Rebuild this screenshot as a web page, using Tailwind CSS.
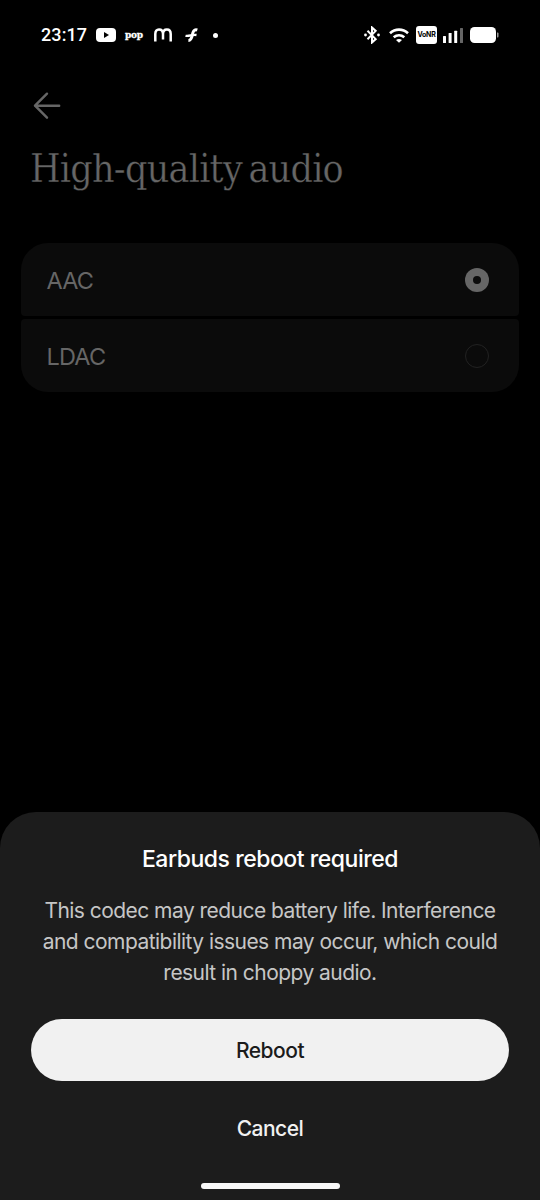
<!DOCTYPE html>
<html lang="en">
<head>
<meta charset="utf-8">
<title>High-quality audio</title>
<script src="https://cdn.jsdelivr.net/npm/@tailwindcss/browser@4"></script>
</head>
<body class="bg-black">
<div class="flex h-[1200px] w-[540px] flex-col overflow-hidden bg-black font-['Inter',sans-serif] text-white">
  <header class="flex h-[70px] items-center justify-between pl-[41px] pr-[41px]">
    <div class="flex items-center">
      <span class="w-[55px] font-['Roboto',sans-serif] text-[18px] leading-5 font-medium tracking-[0.1px]">23:17</span>
      <svg class="mr-[9px] h-[14px] w-5" viewBox="0 0 20 14"><rect width="20" height="14" rx="4" fill="#fff"/><path d="M8 4l5 3-5 3z" fill="#000"/></svg>
      <span class="w-[29px] pb-px font-['DejaVu_Serif_Condensed','DejaVu_Serif',serif] text-[10px] leading-3 font-bold tracking-[-0.3px] [-webkit-text-stroke:0.3px_white]">pop</span>
      <svg class="mr-[13px] h-[14px] w-[18px]" viewBox="0 0 18 14" fill="none" stroke="#fff" stroke-width="2.5"><path d="M1.3 13.500V6C1.3 3 2.8 1.4 5 1.4S9 3 9 6v5.5M9 6c0-3 1.6-4.600 3.900-4.600S16.700 3 16.700 6v7.500"/></svg>
      <svg class="mr-[14px] h-[14px] w-[14px]" viewBox="0 0 14 14" fill="none" stroke="#fff"><path d="M12.300 2C9 .9 7.900 3.800 7.300 7S6 12.500 3.400 12.500" stroke-width="3"/><path d="M.5 7.800c4 .8 6.500-1.600 11-.8" stroke-width="2.300"/></svg>
      <span class="size-[5px] rounded-full bg-white"></span>
    </div>
    <div class="flex items-center">
      <svg class="mr-[9px] h-[18px] w-4" viewBox="0 0 16 18" fill="none" stroke="#fff" stroke-width="2"><path d="M3.500 4.800l8.200 8.300L8 16.500v-15l3.700 3.400-8.200 8.300"/><circle cx="1.500" cy="9" r="1.400" fill="#fff" stroke="none"/><circle cx="14.500" cy="9" r="1.400" fill="#fff" stroke="none"/></svg>
      <svg class="mr-[7px] h-[15px] w-5" viewBox="0 0 20 15" fill="none" stroke="#fff" stroke-width="2.600"><path d="M1 5.300c5.200-4.900 12.800-4.900 18 0M4.700 9.300c3.200-2.700 7.400-2.700 10.600 0"/><path d="M7 12c1.800-1.500 4.200-1.500 6 0l-3 2.800z" fill="#fff" stroke="none"/></svg>
      <span class="mr-[6px] flex h-[18px] w-[21px] items-center justify-center rounded-[3px] bg-white text-[7px] font-bold tracking-[-0.2px] text-black">VoNR</span>
      <svg class="mr-[7px] h-[15px] w-5" viewBox="0 0 20 15" fill="#fff"><rect x="0" y="8" width="3" height="7" rx=".5"/><rect x="5.600" y="5" width="3" height="10" rx=".5"/><rect x="11.200" y="2.800" width="3" height="12.200" rx=".5"/><rect x="17" y="0" width="3" height="15" rx=".5" fill="#666"/></svg>
      <svg class="h-4 w-[29px]" viewBox="0 0 29 16"><rect width="26" height="16" rx="4.500" fill="#fff"/><path d="M27 5.500h.5q1 0 1 1v3q0 1-1 1H27z" fill="#999"/></svg>
    </div>
  </header>

  <main class="flex flex-1 flex-col">
    <svg class="mt-[22px] ml-[33px] h-7 w-7" viewBox="0 0 28 28" fill="none" stroke="#666" stroke-width="2.400" stroke-linecap="round" stroke-linejoin="round"><path d="M26.200 13.700H2M14 1.700L2 13.700l12 12"/></svg>
    <h1 class="mt-[24px] ml-[30px] h-[52px] font-['DejaVu_Serif_Condensed','DejaVu_Serif',serif] text-[39px] leading-[50px] tracking-[-0.75px] [word-spacing:-4px] whitespace-nowrap text-[#666] [-webkit-text-stroke:0.35px_black]">High-quality audio</h1>
    <ul class="mx-[21px] mt-[47px] flex flex-col gap-[3px] text-[23.500px] text-[#666]">
      <li class="flex h-[73px] items-center justify-between rounded-t-[27px] rounded-b-[4px] bg-[#0b0b0b] pr-[30px] pl-[25.500px]"><span class="pt-[2px] tracking-[-0.9px]">AAC</span><span class="flex size-6 items-center justify-center rounded-full bg-[#666]"><span class="size-2 rounded-full bg-[#0b0b0b]"></span></span></li>
      <li class="flex h-[73px] items-center justify-between rounded-t-[4px] rounded-b-[27px] bg-[#0b0b0b] pr-[30px] pl-[25.500px]"><span class="pt-[2px] tracking-[-0.8px]">LDAC</span><span class="size-6 rounded-full border border-[#222]"></span></li>
    </ul>
  </main>

  <section class="flex h-[388px] flex-col items-center rounded-t-[36px] bg-[#1c1c1c]">
    <h2 class="mt-[32px] text-[23px] leading-[30px] font-medium tracking-[-0.47px]">Earbuds reboot required</h2>
    <p class="mt-[21px] text-center text-[21px] leading-[31px] tracking-[-0.54px] whitespace-nowrap text-[#c6c6c6]">This codec may reduce battery life. Interference<br>and compatibility issues may occur, which could<br>result in choppy audio.</p>
    <button class="mt-[31px] h-[62px] w-[478px] rounded-full bg-[#f1f1f1] pt-[2px] text-[21px] font-medium tracking-[-0.5px] text-[#1b1b1b]">Reboot</button>
    <button class="mt-[32px] h-[31px] text-[21px] leading-[31px] font-medium tracking-[-0.5px] text-[#f1f1f1]">Cancel</button>
    <div class="mt-[39px] h-[6px] w-[139px] rounded-full bg-[#f8f8f8]"></div>
  </section>
</div>
</body>
</html>
